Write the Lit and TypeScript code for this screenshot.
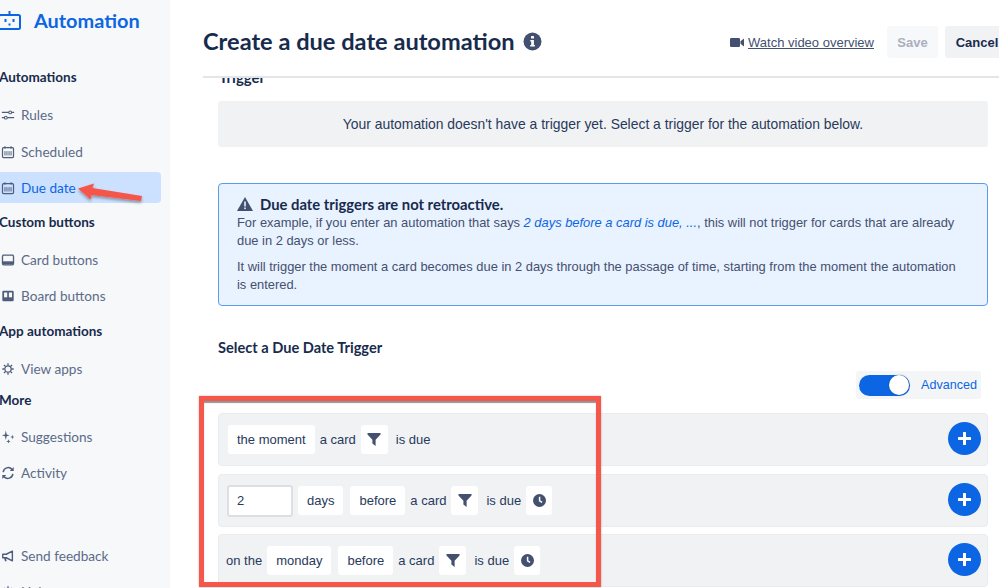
import { LitElement, html, css, svg } from "lit";
import { customElement } from "lit/decorators.js";

const ic = (body: unknown, size = 14) => html`<svg class="ic" width=${size} height=${size} viewBox="0 0 16 16">${body}</svg>`;
const calendar = svg`<rect x="1.7" y="3" width="12.6" height="11.3" rx="1.2" fill="none" stroke="currentColor" stroke-width="1.4"/><path d="M4.5 1.3v3M11.5 1.3v3M4.5 7v5M6.8 7v5M9.2 7v5M11.5 7v5" stroke="currentColor" stroke-width="1.1"/>`;
const icons: Record<string, unknown> = {
  rules: svg`<path d="M1 5h8M12 5h3M1 11h3M7 11h8" stroke="currentColor" stroke-width="1.3" fill="none"/><circle cx="10.5" cy="5" r="1.6" fill="none" stroke="currentColor" stroke-width="1.2"/><circle cx="5.5" cy="11" r="1.6" fill="none" stroke="currentColor" stroke-width="1.2"/>`,
  calendar,
  card: svg`<rect x="1.7" y="2.5" width="12.6" height="11" rx="1.4" fill="none" stroke="currentColor" stroke-width="1.5"/><rect x="2" y="9.5" width="12" height="3.5" fill="currentColor"/>`,
  board: svg`<rect x="1.5" y="2" width="13" height="12" rx="1.4" fill="currentColor"/><rect x="3.5" y="4" width="3.6" height="5.5" fill="#f7f8fa"/><rect x="9" y="4" width="3.6" height="5.5" fill="#f7f8fa"/>`,
  gear: svg`<circle cx="8" cy="8" r="3.6" fill="none" stroke="currentColor" stroke-width="1.4"/><path d="M8 1.5v2.6M8 11.9v2.6M1.5 8h2.6M11.9 8h2.6M3.4 3.4l1.9 1.9M10.7 10.7l1.9 1.9M12.6 3.4l-1.9 1.9M5.3 10.7l-1.9 1.9" stroke="currentColor" stroke-width="1.5"/>`,
  spark: svg`<path d="M5.5 0.5l1 4.5 3.5 1-3.5 1-1 4.5-1-4.5L1 6l3.5-1zM13 5.5l.6 1.9 1.9.6-1.9.6-.6 1.9-.6-1.9-1.9-.6 1.9-.6zM8.5 10.5l.6 1.9 1.9.6-1.9.6-.6 1.9-.6-1.9-1.9-.6 1.9-.6z" fill="currentColor"/>`,
  refresh: svg`<path d="M2.5 7A5.7 5.7 0 0 1 12.6 4M13.5 9A5.7 5.7 0 0 1 3.4 12" fill="none" stroke="currentColor" stroke-width="1.7"/><path d="M14.5 1.2v4.6H10zM1.5 14.8v-4.6H6z" fill="currentColor"/>`,
  mega: svg`<path d="M2 6h4l7-3.5v11L6 10H2z" fill="none" stroke="currentColor" stroke-width="1.6" stroke-linejoin="round"/><path d="M3.5 10l1 4h2l-1-4z" fill="currentColor"/>`,
};
const filterIc = html`<svg class="glyph" width="14" height="13" viewBox="0 0 14 13"><path d="M.5 0h13v1.6L8.6 6.8V13L5.4 10.4V6.8L.5 1.6z" fill="#44506f"/></svg>`;
const clockIc = html`<svg class="glyph" width="13" height="13" viewBox="0 0 13 13"><circle cx="6.5" cy="6.5" r="6.5" fill="#44506f"/><path d="M6.6 2.8v4l2.5 1.6" fill="none" stroke="#fff" stroke-width="1.5"/></svg>`;

@customElement("app-root")
export class AppRoot extends LitElement {
  static styles = css`
    :host { display: flex; position: relative; width: 999px; height: 588px; overflow: hidden; background: #fff; color: #172b4d; font-family: "Liberation Sans", Arial, sans-serif; }
    .side { width: 170px; flex: none; background: #f7f8fa; font-family: Lato, sans-serif; box-sizing: border-box; padding-top: 8px; display: flex; flex-direction: column; overflow: hidden; }
    .side > * { flex: none; }
    .brand { display: flex; align-items: center; height: 24px; margin-left: -2px; gap: 13px; color: #0c66e4; font-size: 19.9px; font-weight: 700; }
    .brand svg { flex: none; }
    .label { font-size: 13.5px; font-weight: 700; color: #172b4d; height: 20px; line-height: 20px; margin-left: -1px; white-space: nowrap; }
    .item { display: flex; align-items: center; gap: 6px; height: 31px; width: 161px; color: #5b6b88; font-size: 13.6px; border-radius: 0 4px 4px 0; white-space: nowrap; box-sizing: border-box; }
    .item .ic { margin-left: 1px; color: #4e5d7c; flex: none; }
    .item.active { background: #cce0ff; color: #0c66e4; }
    .main { flex: 1; min-width: 0; display: flex; flex-direction: column; }
    .head { height: 78px; box-sizing: border-box; flex: none; margin-left: 33px; border-bottom: 2px solid #e3e5e8; display: flex; align-items: center; padding-top: 8px; white-space: nowrap; }
    h1 { margin: -2px 0 0; font: 700 23.6px/32px Lato, sans-serif; color: #172b4d; }
    .info { margin: -2px 0 0 8px; flex: none; }
    .video { margin-left: auto; display: flex; align-items: center; gap: 4px; font-size: 13px; color: #44506f; text-decoration: underline; }
    .btn { height: 32px; display: flex; align-items: center; justify-content: center; border-radius: 3px; font-size: 13px; font-weight: 700; background: #f1f2f4; flex: none; }
    .save { width: 51px; margin-left: 13px; background: #f7f8f9; color: #a9b0bf; }
    .cancel { width: 64px; margin-left: 7px; margin-right: -10px; color: #172b4d; }
    .body { flex: 1; overflow: hidden; padding: 0 11px 0 48px; }
    .trigger { font: 700 15px/16px Lato, sans-serif; margin: -9px 0 0 1px; height: 16px; color: #172b4d; }
    .empty { margin-top: 16px; height: 46px; display: flex; align-items: center; justify-content: center; background: #f1f2f4; border-radius: 3px; font-size: 13.9px; color: #283a5b; }
    .alert { margin-top: 36px; height: 123px; box-sizing: border-box; border: 1px solid #5b9cf0; border-radius: 4px; background: #e9f2ff; padding: 10px 26px 0 18px; font-size: 12.9px; line-height: 17.5px; color: #44506f; }
    .alert h3 { margin: 0; display: flex; align-items: center; gap: 7px; font: 700 14.8px/20px Lato, sans-serif; color: #172b4d; }
    .alert p { margin: 0 0 9px; }
    .alert em { color: #0c66e4; }
    h2 { margin: 32px 0 0; font: 700 14.6px/20px Lato, sans-serif; color: #172b4d; }
    .adv { display: flex; justify-content: flex-end; margin: 13px 7px 14px 0; }
    .adv-box { width: 125px; height: 28px; background: #f4f5f7; border-radius: 3px; display: flex; align-items: center; padding-left: 3px; box-sizing: border-box; color: #0c66e4; font-size: 12.6px; gap: 11px; }
    .track { width: 51px; height: 21px; border-radius: 11px; background: #0c66e4; display: flex; justify-content: flex-end; align-items: center; padding-right: 1px; box-sizing: border-box; }
    .knob { width: 20px; height: 20px; border-radius: 50%; background: #fff; box-shadow: 0 0 2px rgba(9,30,66,.4); }
    .rows { display: flex; flex-direction: column; gap: 7px; }
    .row { height: 53px; flex: none; box-sizing: border-box; background: #f1f2f4; border: 1px solid #e9ebee; border-radius: 4px; display: flex; align-items: center; gap: 5px; padding: 0 6px 0 7px; font-size: 13px; color: #283a5b; white-space: nowrap; }
    .row:first-child { margin-bottom: 1px; }
    .chip { height: 29px; background: #fff; border-radius: 3px; display: flex; align-items: center; justify-content: center; padding: 0 9px; }
    .chip + .chip { margin-left: 2px; }
    .lead { margin-left: 2px; }
    .fchip { width: 27px; padding: 0; margin-right: 3px; box-sizing: border-box; }
    .cchip { width: 26px; padding: 0; box-sizing: border-box; }
    .input { width: 66px; height: 32px; box-sizing: border-box; margin-left: 1px; background: #fff; border: 2px solid #dcdfe4; border-radius: 3px; display: flex; align-items: center; padding-left: 8px; }
    .plus { margin: 0 0 3px auto; width: 33px; height: 33px; border-radius: 50%; background: #0c66e4; display: flex; align-items: center; justify-content: center; flex: none; }
    .frame { position: absolute; left: 199px; top: 396px; width: 402px; height: 191px; box-sizing: border-box; border: 5px solid #f5574a; box-shadow: inset 0 2px 1px rgba(60,60,60,.55), 0 0 2px rgba(60,60,60,.35); pointer-events: none; }
    .arrow { position: absolute; left: 70px; top: 175px; overflow: visible; }
  `;

  private item(icon: string, text: string, mt = 0, active = false) {
    return html`<div class="item ${active ? "active" : ""}" style=${mt ? `margin-top:${mt}px` : ""}>${ic(icons[icon])}<span>${text}</span></div>`;
  }

  private row(content: unknown) {
    return html`<div class="row">${content}<div class="plus"><svg width="13" height="13" viewBox="0 0 13 13"><path d="M6.5 1v11M1 6.5h11" stroke="#fff" stroke-width="3" stroke-linecap="round"/></svg></div></div>`;
  }

  render() {
    const filter = html`<div class="chip fchip">${filterIc}</div>`;
    const clock = html`<div class="chip cchip">${clockIc}</div>`;
    return html`
      <aside class="side">
        <div class="brand">
          <svg width="23" height="19" viewBox="0 0 23 19"><rect x="1" y="4" width="21" height="14" rx="1.5" fill="none" stroke="#0c66e4" stroke-width="2"/><path d="M11.5 0v4" stroke="#0c66e4" stroke-width="2"/><path d="M7.5 8v3M15.5 8v3M11.5 12.5v2" stroke="#0c66e4" stroke-width="2"/></svg>
          <span>Automation</span>
        </div>
        <div class="label" style="margin-top:35px">Automations</div>
        ${this.item("rules", "Rules", 12)}
        ${this.item("calendar", "Scheduled", 6)}
        ${this.item("calendar", "Due date", 5, true)}
        <div class="label" style="margin-top:9px">Custom buttons</div>
        ${this.item("card", "Card buttons", 12)}
        ${this.item("board", "Board buttons", 5)}
        <div class="label" style="margin-top:10px">App automations</div>
        ${this.item("gear", "View apps", 12)}
        <div class="label" style="margin-top:6px">More</div>
        ${this.item("spark", "Suggestions", 11)}
        ${this.item("refresh", "Activity", 5)}
        ${this.item("mega", "Send feedback", 52)}
        ${this.item("gear", "Help", 5)}
      </aside>
      <main class="main">
        <header class="head">
          <h1>Create a due date automation</h1>
          <svg class="info" width="19" height="19" viewBox="0 0 19 19"><circle cx="9.5" cy="9.5" r="9" fill="#44506f"/><rect x="8" y="4" width="3" height="2.6" rx=".5" fill="#fff"/><path d="M7.3 8h3.6v5h1v1.6H7.2V13h1V9.6h-.9z" fill="#fff"/></svg>
          <div class="video">
            <svg width="14" height="11" viewBox="0 0 14 11"><rect x="0" y="1" width="10" height="9" rx="1.2" fill="#44506f"/><path d="M10.5 4.2L14 1.5v8l-3.5-2.7z" fill="#44506f"/></svg>
            <span>Watch video overview</span>
          </div>
          <div class="btn save">Save</div>
          <div class="btn cancel">Cancel</div>
        </header>
        <section class="body">
          <div class="trigger">Trigger</div>
          <div class="empty">Your automation doesn't have a trigger yet. Select a trigger for the automation below.</div>
          <div class="alert">
            <h3><svg width="16" height="14" viewBox="0 0 16 14"><path d="M8 0l8 14H0z" fill="#44506f"/><rect x="7.2" y="4.5" width="1.6" height="5" fill="#e9f2ff"/><rect x="7.2" y="10.5" width="1.6" height="1.6" fill="#e9f2ff"/></svg>Due date triggers are not retroactive.</h3>
            <p>For example, if you enter an automation that says <em>2 days before a card is due, ...</em>, this will not trigger for cards that are already due in 2 days or less.</p>
            <p>It will trigger the moment a card becomes due in 2 days through the passage of time, starting from the moment the automation is entered.</p>
          </div>
          <h2>Select a Due Date Trigger</h2>
          <div class="adv"><div class="adv-box"><div class="track"><div class="knob"></div></div><span>Advanced</span></div></div>
          <div class="rows">
            ${this.row(html`<div class="chip lead">the moment</div><span>a card</span>${filter}<span>is due</span>`)}
            ${this.row(html`<div class="input">2</div><div class="chip">days</div><div class="chip">before</div><span>a card</span>${filter}<span>is due</span>${clock}`)}
            ${this.row(html`<span>on the</span><div class="chip">monday</div><div class="chip">before</div><span>a card</span>${filter}<span>is due</span>${clock}`)}
          </div>
        </section>
      </main>
      <div class="frame"></div>
      <svg class="arrow" width="80" height="36" viewBox="0 0 80 36">
        <defs><filter id="s" x="-20%" y="-40%" width="140%" height="200%"><feDropShadow dx="0" dy="2" stdDeviation="1.5" flood-color="#000" flood-opacity=".35"/></filter></defs>
        <path d="M8 13.5L24 8.5 22.5 13 72 21 71 26 21.5 20 20.5 24.5z" fill="#f5574a" filter="url(#s)"/>
      </svg>
    `;
  }
}
